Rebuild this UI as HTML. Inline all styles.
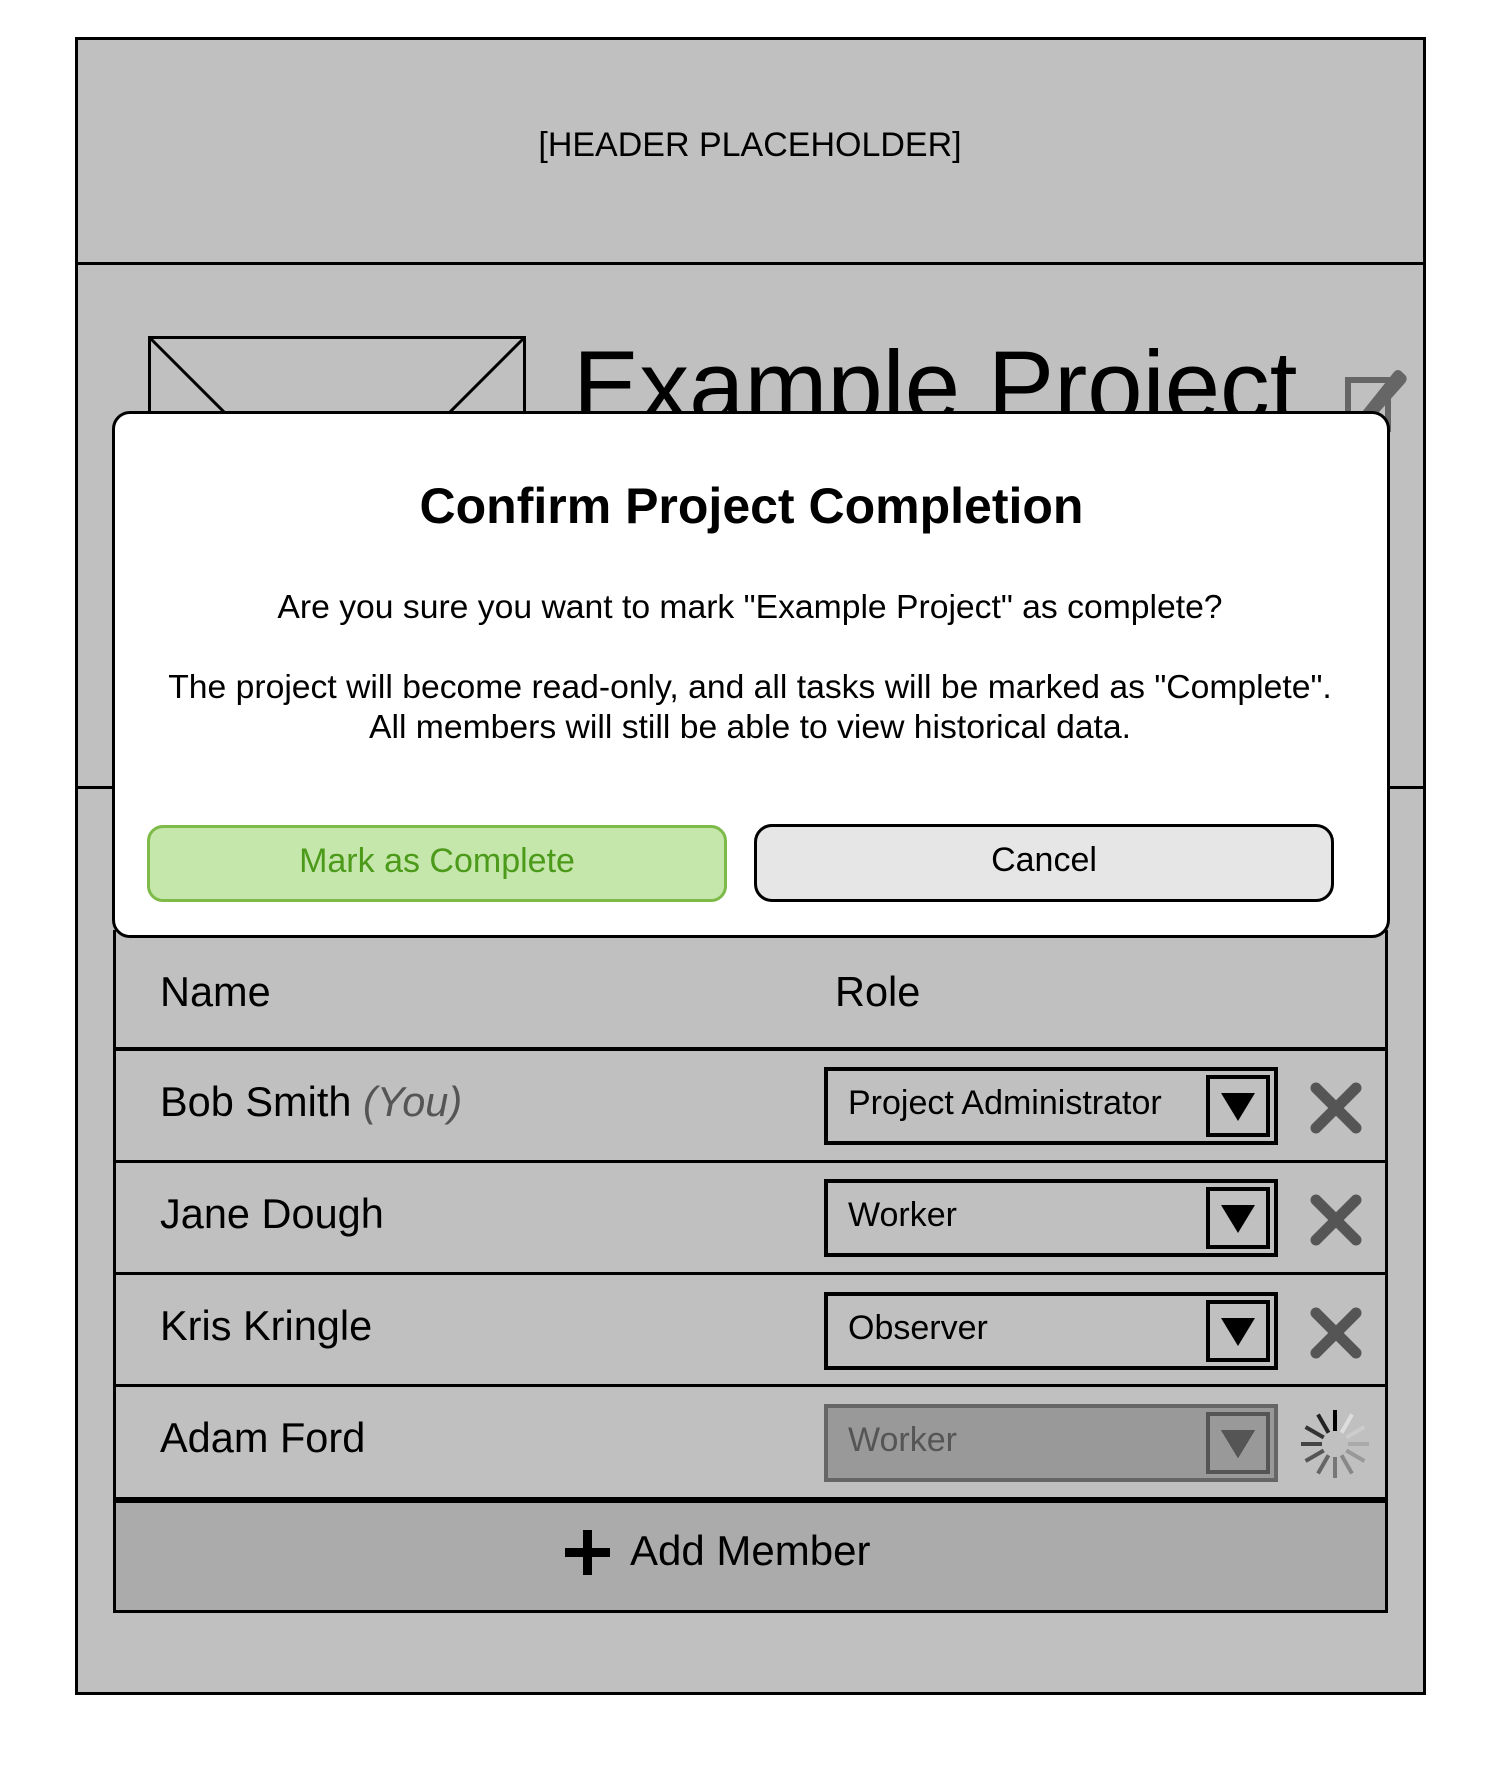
<!DOCTYPE html>
<html><head><meta charset="utf-8"><style>
*{box-sizing:border-box;margin:0;padding:0}
body{width:1500px;height:1771px;background:#fff;position:relative;font-family:"Liberation Sans",sans-serif;overflow:hidden}
.abs{position:absolute}
.frame{left:75px;top:37px;width:1351px;height:1658px;background:#c0c0c0;border:3px solid #000}
.t{position:absolute;white-space:nowrap}
.row{position:absolute;left:113px;width:1275px;border:3px solid #000;border-top:none;background:#c0c0c0}
.nm{position:absolute;left:44px;font-size:41.5px;color:#000}
.dd{position:absolute;left:824px;width:454px;height:78px;border:4px solid #000}
.dd span{position:absolute;left:20px;top:13px;font-size:34px}
.dd i{position:absolute;right:4px;top:4px;width:64px;height:62px;border:4px solid #000}
.dd i:after{content:"";position:absolute;left:11px;top:14px;border-left:17px solid transparent;border-right:17px solid transparent;border-top:28px solid #000}
</style></head><body>
<div class="abs frame"></div>
<div class="abs" style="left:75px;top:262px;width:1351px;height:3px;background:#000"></div>
<div class="t" style="left:0;width:1500px;text-align:center;top:126px;font-size:34px">[HEADER PLACEHOLDER]</div>
<svg class="abs" style="left:148px;top:336px" width="378" height="100"><rect x="1.5" y="1.5" width="375" height="200" fill="none" stroke="#000" stroke-width="3"/><line x1="2" y1="2" x2="200" y2="200" stroke="#000" stroke-width="3"/><line x1="376" y1="2" x2="178" y2="200" stroke="#000" stroke-width="3"/></svg>
<div class="t" style="left:573px;top:330px;font-size:99.5px">Example Project</div>
<svg class="abs" style="left:1340px;top:362px" width="70" height="70"><rect x="8" y="18" width="40" height="50" fill="none" stroke="#666" stroke-width="6"/><path d="M22 50 L54 10 Q58 6 62 10 L66 14 Q68 18 64 22 L32 58 L18 62 Z" fill="#666"/></svg>
<div class="abs" style="left:75px;top:786px;width:1351px;height:3px;background:#000"></div>
<!-- table -->
<div class="row" style="top:930px;height:120px"><div class="nm" style="top:38px">Name</div><div class="nm" style="left:719px;top:38px">Role</div></div>
<div class="abs" style="left:113px;top:1048px;width:1275px;height:3px;background:#000"></div>
<div class="row" style="top:1051px;height:112px"><div class="nm" style="top:27px">Bob Smith <i style="color:#555">(You)</i></div></div>
<div class="row" style="top:1163px;height:112px"><div class="nm" style="top:27px">Jane Dough</div></div>
<div class="row" style="top:1275px;height:112px"><div class="nm" style="top:27px">Kris Kringle</div></div>
<div class="row" style="top:1387px;height:113px"><div class="nm" style="top:27px">Adam Ford</div></div>
<div class="row" style="top:1500px;height:113px;background:#ababab;border-top:3px solid #000"></div>
<div class="abs" style="left:565px;top:1530px;width:45px;height:45px"><b style="position:absolute;left:18px;top:0;width:9px;height:45px;background:#000"></b><b style="position:absolute;left:0;top:18px;width:45px;height:9px;background:#000"></b></div>
<div class="t" style="left:630px;top:1527px;font-size:42px">Add Member</div>
<div class="dd" style="top:1067px"><span>Project Administrator</span><i></i></div>
<div class="dd" style="top:1179px"><span>Worker</span><i></i></div>
<div class="dd" style="top:1292px"><span>Observer</span><i></i></div>
<div class="dd" style="top:1404px;background:#999;border-color:#666;color:#555"><span>Worker</span><i style="border-color:#555"><b style="position:absolute;left:11px;top:14px;border-left:17px solid transparent;border-right:17px solid transparent;border-top:28px solid #555;z-index:1"></b></i></div>
<svg class="abs" style="left:1308px;top:1080px" width="56" height="56"><path d="M8 8 L48 48 M48 8 L8 48" stroke="#555" stroke-width="11" stroke-linecap="round"/></svg>
<svg class="abs" style="left:1308px;top:1192px" width="56" height="56"><path d="M8 8 L48 48 M48 8 L8 48" stroke="#555" stroke-width="11" stroke-linecap="round"/></svg>
<svg class="abs" style="left:1308px;top:1305px" width="56" height="56"><path d="M8 8 L48 48 M48 8 L8 48" stroke="#555" stroke-width="11" stroke-linecap="round"/></svg>
<svg class="abs" style="left:1295px;top:1404px" width="80" height="80"><g transform="translate(40,40)" stroke-width="4" stroke-linecap="butt">
<line x1="0" y1="-13" x2="0" y2="-34" stroke="#000" transform="rotate(0)"/>
<line x1="0" y1="-13" x2="0" y2="-34" stroke="#ddd" transform="rotate(30)"/>
<line x1="0" y1="-13" x2="0" y2="-34" stroke="#ccc" transform="rotate(60)"/>
<line x1="0" y1="-13" x2="0" y2="-34" stroke="#aaa" transform="rotate(90)"/>
<line x1="0" y1="-13" x2="0" y2="-34" stroke="#999" transform="rotate(120)"/>
<line x1="0" y1="-13" x2="0" y2="-34" stroke="#888" transform="rotate(150)"/>
<line x1="0" y1="-13" x2="0" y2="-34" stroke="#777" transform="rotate(180)"/>
<line x1="0" y1="-13" x2="0" y2="-34" stroke="#666" transform="rotate(210)"/>
<line x1="0" y1="-13" x2="0" y2="-34" stroke="#555" transform="rotate(240)"/>
<line x1="0" y1="-13" x2="0" y2="-34" stroke="#444" transform="rotate(270)"/>
<line x1="0" y1="-13" x2="0" y2="-34" stroke="#333" transform="rotate(300)"/>
<line x1="0" y1="-13" x2="0" y2="-34" stroke="#222" transform="rotate(330)"/>
</g></svg>
<!-- modal -->
<div class="abs" style="left:112px;top:411px;width:1278px;height:527px;background:#fff;border:3px solid #000;border-radius:18px"></div>
<div class="t" style="left:0;width:1500px;text-align:center;top:477px;font-size:50px;font-weight:bold;padding-left:3px">Confirm Project Completion</div>
<div class="t" style="left:0;width:1500px;text-align:center;top:587px;font-size:33.7px;line-height:40px">Are you sure you want to mark "Example Project" as complete?</div>
<div class="t" style="left:0;width:1500px;text-align:center;top:667px;font-size:33.7px;line-height:40px">The project will become read-only, and all tasks will be marked as "Complete".<br>All members will still be able to view historical data.</div>
<div class="abs" style="left:147px;top:825px;width:580px;height:77px;background:#c6e7ac;border:3px solid #7dba48;border-radius:16px;color:#4c9a1a;font-size:34px;text-align:center;line-height:67px">Mark as Complete</div>
<div class="abs" style="left:754px;top:824px;width:580px;height:78px;background:#e6e6e6;border:3px solid #000;border-radius:18px;font-size:34px;text-align:center;line-height:67px">Cancel</div>
</body></html>
